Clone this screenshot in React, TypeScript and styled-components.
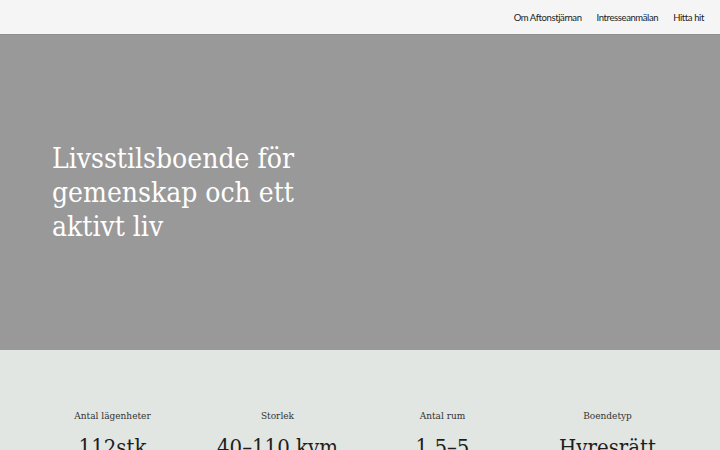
import React from 'react'
import styled, { createGlobalStyle } from 'styled-components'

const GlobalStyle = createGlobalStyle`
  html, body {
    margin: 0;
    padding: 0;
    background: #e1e6e2;
  }
  body {
    font-family: "DejaVu Serif", serif;
  }
`

const Header = styled.header`
  height: 34px;
  background: #f5f5f5;
  border-bottom: 1px solid #8f8f8f;
  display: flex;
  align-items: center;
  justify-content: flex-end;
  padding: 0 16px;
`

const Nav = styled.nav`
  display: flex;
  gap: 15px;
`

const NavLink = styled.a`
  font-family: "Lato", "Liberation Sans", sans-serif;
  font-size: 9.5px;
  letter-spacing: -0.4px;
  color: #1b1b1b;
  text-decoration: none;
`

const Hero = styled.section`
  height: 315px;
  background: #999999;
  display: flex;
  align-items: center;
  padding: 0 52px;
  box-sizing: border-box;
`

const Title = styled.h1`
  margin: 0;
  max-width: 300px;
  font-family: "DejaVu Serif Condensed", "DejaVu Serif", serif;
  font-weight: normal;
  font-size: 28px;
  line-height: 34px;
  color: #ffffff;
`

const Stats = styled.section`
  display: grid;
  grid-template-columns: repeat(4, 1fr);
  padding: 60px 30px 0;
`

const Stat = styled.div`
  display: flex;
  flex-direction: column;
  align-items: center;
  gap: 14px;
  color: #1e1e1e;
`

const Label = styled.span`
  font-family: "DejaVu Serif Condensed", "DejaVu Serif", serif;
  font-size: 10px;
  color: #333333;
`

const Value = styled.span`
  font-family: "DejaVu Serif Condensed", "DejaVu Serif", serif;
  font-size: 22px;
`

const stats = [
  { label: 'Antal lägenheter', value: '112stk' },
  { label: 'Storlek', value: '40–110 kvm' },
  { label: 'Antal rum', value: '1,5–5' },
  { label: 'Boendetyp', value: 'Hyresrätt' },
]

export default function App() {
  return (
    <>
      <GlobalStyle />
      <Header>
        <Nav>
          <NavLink href="#">Om Aftonstjärnan</NavLink>
          <NavLink href="#">Intresseanmälan</NavLink>
          <NavLink href="#">Hitta hit</NavLink>
        </Nav>
      </Header>
      <Hero>
        <Title>Livsstilsboende för gemenskap och ett aktivt liv</Title>
      </Hero>
      <Stats>
        {stats.map((s) => (
          <Stat key={s.label}>
            <Label>{s.label}</Label>
            <Value>{s.value}</Value>
          </Stat>
        ))}
      </Stats>
    </>
  )
}
